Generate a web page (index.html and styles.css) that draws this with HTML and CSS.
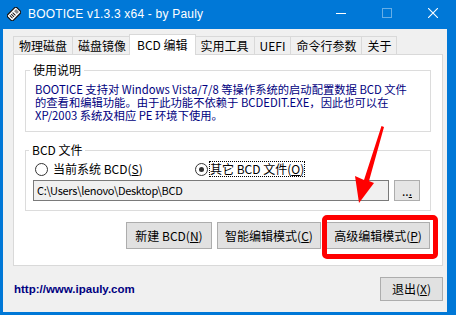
FILE: index.html
```html
<!DOCTYPE html>
<html lang="zh-CN">
<head>
    <meta charset="UTF-8">
    <meta name="viewport" content="width=device-width, initial-scale=1.0">
    <title>BOOTICE v1.3.3 x64 - by Pauly</title>
    <link rel="stylesheet" href="styles.css">
</head>
<body>
    <div class="window">
        <div class="titlebar">
            <svg class="app-icon" width="14" height="14" viewBox="0 0 14 14">
                <g transform="rotate(-45 7 7)">
                    <rect x="0.5" y="3" width="13" height="8" rx="1.5" fill="#fff" stroke="#111" stroke-width="1.2"/>
                    <line x1="3" y1="5" x2="3" y2="9" stroke="#111"/>
                    <line x1="5" y1="5" x2="5" y2="9" stroke="#111"/>
                    <line x1="7" y1="5" x2="7" y2="9" stroke="#111"/>
                    <rect x="9" y="5" width="3" height="4" fill="#888"/>
                </g>
            </svg>
            <span class="title">BOOTICE v1.3.3 x64 - by Pauly</span>
            <div class="caption">
                <span class="cap-btn">
                    <svg width="10" height="10" viewBox="0 0 10 10"><line x1="0" y1="5.5" x2="10" y2="5.5" stroke="#fff"/></svg>
                </span>
                <span class="cap-btn disabled">
                    <svg width="10" height="10" viewBox="0 0 10 10"><rect x="0.5" y="0.5" width="9" height="9" fill="none" stroke="#fff"/></svg>
                </span>
                <span class="cap-btn">
                    <svg width="10" height="10" viewBox="0 0 10 10"><path d="M0 0L10 10M10 0L0 10" stroke="#fff" stroke-width="1.1"/></svg>
                </span>
            </div>
        </div>

        <div class="frame">
            <div class="client">
                <div class="tabs">
                    <div class="tab">物理磁盘</div>
                    <div class="tab">磁盘镜像</div>
                    <div class="tab selected">BCD 编辑</div>
                    <div class="tab">实用工具</div>
                    <div class="tab">UEFI</div>
                    <div class="tab">命令行参数</div>
                    <div class="tab">关于</div>
                </div>
                <div class="page">
                    <fieldset class="group info">
                        <legend>使用说明</legend>
                        <p class="desc">BOOTICE 支持对 Windows Vista/7/8 等操作系统的启动配置数据 BCD 文件<br>的查看和编辑功能。由于此功能不依赖于 BCDEDIT.EXE，因此也可以在<br>XP/2003 系统及相应 PE 环境下使用。</p>
                    </fieldset>
                    <fieldset class="group bcd-file">
                        <legend>BCD 文件</legend>
                        <div class="radios">
                            <label class="radio"><span class="dot"></span>当前系统 BCD(<u>S</u>)</label>
                            <label class="radio checked"><span class="dot"></span><span class="focus">其它 BCD 文件(<u>O</u>)</span></label>
                        </div>
                        <div class="path-row">
                            <div class="path">C:\Users\lenovo\Desktop\BCD</div>
                            <button class="btn browse">..<u>.</u></button>
                        </div>
                    </fieldset>
                    <div class="actions">
                        <button class="btn">新建 BCD(<u>N</u>)</button>
                        <button class="btn wide">智能编辑模式(<u>C</u>)</button>
                        <button class="btn wide">高级编辑模式(<u>P</u>)</button>
                    </div>
                </div>
                <div class="footer">
                    <a class="site">http://www.ipauly.com</a>
                    <button class="btn exit">退出(<u>X</u>)</button>
                </div>
            </div>
        </div>

        <div class="mark-box"></div>
        <svg class="mark-arrow" width="456" height="315" viewBox="0 0 456 315">
            <polygon points="381.5,126 384,127 369,181 374,183 359,203 355,176 364,180" fill="#ff0000"/>
        </svg>
    </div>
</body>
</html>
```

FILE: styles.css
```css
* {
    box-sizing: border-box;
}
body {
    margin: 0;
    width: 456px;
    height: 315px;
    overflow: hidden;
    background-color: #0078d7;
    font-family: "Noto Sans CJK SC", sans-serif;
    font-size: 12px;
    color: #000;
}
.window {
    position: relative;
    width: 456px;
    height: 315px;
}
.titlebar {
    height: 29px;
    display: flex;
    align-items: center;
    color: white;
    font-family: "Liberation Sans", sans-serif;
}
.app-icon {
    margin-left: 7px;
    margin-top: -2px;
}
.title {
    margin-left: 7px;
    margin-top: -2px;
    letter-spacing: 0.2px;
}
.caption {
    margin-left: auto;
    display: flex;
    height: 29px;
}
.cap-btn {
    width: 46px;
    display: flex;
    align-items: center;
    justify-content: center;
    padding-bottom: 3px;
}
.cap-btn.disabled svg {
    opacity: 0.4;
}
.frame {
    height: 283px;
    display: flex;
}
.client {
    width: 444px;
    margin-left: 3px;
    background-color: #f0f0f0;
    padding: 5px 4px 0 10px;
}
.tabs {
    display: flex;
    align-items: flex-end;
    height: 20px;
}
.tab {
    height: 18px;
    line-height: 17px;
    padding: 0 5px;
    border: 1px solid #d9d9d9;
    border-bottom: none;
    background-color: #f0f0f0;
    margin-right: -1px;
    white-space: nowrap;
}
.tab.selected {
    position: relative;
    z-index: 1;
    height: 21px;
    line-height: 19px;
    margin: 0 -1px -1px -2px;
    padding: 0 7px;
    background-color: white;
}
.page {
    width: 430px;
    height: 212px;
    background-color: white;
    border: 1px solid #d9d9d9;
    padding: 8px 11px 0 11px;
}
.group {
    margin: 0;
    border: 1px solid #dcdcdc;
    min-inline-size: 0;
}
.group legend {
    padding: 0 3px;
    line-height: 14px;
    margin-left: -5px;
}
.info {
    padding: 6px 9px 9px 9px;
}
.desc {
    margin: 0;
    font-size: 11.3px;
    line-height: 13px;
    color: #000080;
    white-space: nowrap;
}
.bcd-file {
    margin-top: 11px;
    padding: 4px 10px 9px 7px;
}
.bcd-file legend {
    margin-left: -4px;
}
.radios {
    display: flex;
    height: 16px;
    align-items: center;
    padding-left: 2px;
}
.radio {
    display: flex;
    align-items: center;
    width: 160px;
    line-height: 16px;
}
.dot {
    width: 13px;
    height: 13px;
    border: 1px solid #333;
    border-radius: 50%;
    margin-right: 5px;
    background-color: white;
    position: relative;
}
.radio.checked .dot::after {
    content: "";
    position: absolute;
    left: 3px;
    top: 3px;
    width: 5px;
    height: 5px;
    border-radius: 50%;
    background-color: #333;
}
.radio.checked .dot {
    margin-right: 2px;
}
.focus {
    outline: 1px dotted #000;
    line-height: 14px;
}
.path-row {
    display: flex;
    margin-top: 3px;
    gap: 5px;
}
.path {
    width: 356px;
    height: 21px;
    line-height: 19px;
    padding-left: 3px;
    font-size: 11px;
    letter-spacing: -0.3px;
    border: 1px solid #7a7a7a;
    background-color: #f0f0f0;
}
.btn {
    font-family: inherit;
    font-size: 12px;
    line-height: 14px;
    background-color: #e1e1e1;
    border: 1px solid #adadad;
    padding: 0;
    color: #000;
}
.browse {
    width: 26px;
    height: 21px;
    background-color: #e5e5e5;
}
.actions {
    display: flex;
    justify-content: flex-end;
    gap: 5px;
    margin-top: 11px;
    padding-right: 1px;
}
.actions .btn {
    width: 86px;
    height: 27px;
}
.actions .btn.wide {
    width: 104px;
}
.footer {
    display: flex;
    align-items: center;
    justify-content: space-between;
    height: 46px;
    padding-left: 1px;
}
.site {
    font-family: "Liberation Sans", sans-serif;
    font-size: 11.5px;
    font-weight: bold;
    color: #000080;
}
.exit {
    width: 63px;
    height: 24px;
}
.mark-box {
    position: absolute;
    left: 322px;
    top: 215px;
    width: 116px;
    height: 44px;
    border: 5px solid #ff0000;
    border-radius: 5px;
}
.mark-arrow {
    position: absolute;
    left: 0;
    top: 0;
}
```
